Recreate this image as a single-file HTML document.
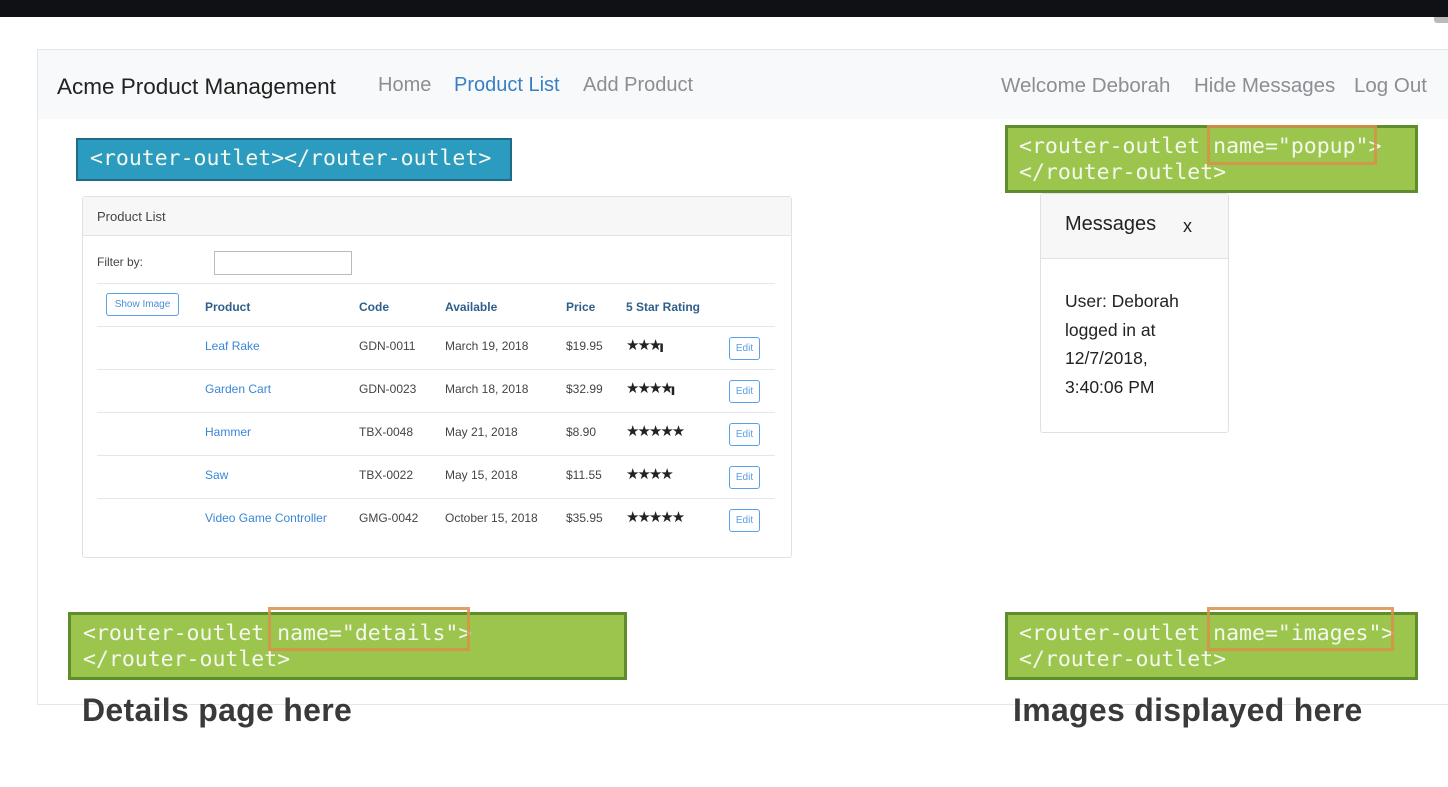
<!DOCTYPE html>
<html><head><meta charset="utf-8">
<style>
*{box-sizing:border-box;margin:0;padding:0}
body{width:1448px;height:787px;background:#fff;position:relative;overflow:hidden;font-family:"Liberation Sans",sans-serif}
.abs{position:absolute}
.mono{font-family:"DejaVu Sans Mono","Liberation Mono",monospace;font-size:21.5px;color:#f4f8ee;line-height:26px;white-space:pre}
.green{background:#9cc54d;border:3px solid #5f8d2c}
.hl{position:absolute;border:3px solid #d8904a;opacity:.85}
.nav{font-size:20px;color:#8a8f94}
.t{position:absolute;font-size:12px;color:#444}
.lnk{color:#3a86d6}
.th{position:absolute;font-size:12px;font-weight:bold;color:#2f5f8a}
.edit{position:absolute;left:729px;width:31px;height:23px;border:1px solid #5aa0e6;border-radius:3px;font-size:10px;color:#5aa0e6;text-align:center;line-height:21px}
.line{position:absolute;left:97px;width:678px;height:1px;background:#e3e6ea}
.st{position:absolute;left:626px;font-size:15px;color:#222;letter-spacing:-2px;line-height:14px}
</style></head><body>
<div class="abs" style="left:0;top:0;width:1448px;height:17px;background:#0f1115"></div>
<div class="abs" style="left:1434px;top:17px;width:14px;height:6px;background:#bbb;border-radius:0 0 0 3px"></div>
<div class="abs" style="left:37px;top:49px;width:1420px;height:656px;border:1px solid #e4e6e9;border-right:none"></div>
<div class="abs" style="left:38px;top:50px;width:1410px;height:69px;background:#f8f9fa"></div>
<div class="abs" style="left:57px;top:74px;font-size:22.5px;color:#222">Acme Product Management</div>
<div class="abs nav" style="left:378px;top:74px">Home</div>
<div class="abs nav" style="left:454px;top:74px;color:#3a7fc1">Product List</div>
<div class="abs nav" style="left:583px;top:74px">Add Product</div>
<div class="abs nav" style="left:1001px;top:74px;font-size:20.5px">Welcome Deborah</div>
<div class="abs nav" style="left:1194px;top:74px;font-size:20.5px">Hide Messages</div>
<div class="abs nav" style="left:1354px;top:74px;font-size:20.5px">Log Out</div>

<div class="abs mono" style="left:76px;top:138px;width:436px;height:43px;background:#2b9bbf;border:2px solid #1f6a85;padding:6px 0 0 12px">&lt;router-outlet&gt;&lt;/router-outlet&gt;</div>

<div class="abs" style="left:82px;top:196px;width:710px;height:362px;border:1px solid #dfe2e5;border-radius:3px"></div>
<div class="abs" style="left:83px;top:197px;width:708px;height:39px;background:#f7f7f7;border-bottom:1px solid #e1e3e6"></div>
<div class="t" style="left:97px;top:209px;font-size:13px">Product List</div>
<div class="t" style="left:97px;top:255px">Filter by:</div>
<div class="abs" style="left:214px;top:251px;width:138px;height:24px;border:1px solid #bbb"></div>
<div class="line" style="top:283px"></div>
<div class="abs" style="left:106px;top:293px;width:73px;height:23px;border:1px solid #5aa0e6;border-radius:3px;font-size:10px;color:#4a8fd6;text-align:center;line-height:21px">Show Image</div>
<div class="th" style="left:205px;top:300px">Product</div>
<div class="th" style="left:359px;top:300px">Code</div>
<div class="th" style="left:445px;top:300px">Available</div>
<div class="th" style="left:566px;top:300px">Price</div>
<div class="th" style="left:626px;top:300px">5 Star Rating</div>
<div class="line" style="top:326px"></div>
<div class="line" style="top:369px"></div>
<div class="line" style="top:412px"></div>
<div class="line" style="top:455px"></div>
<div class="line" style="top:498px"></div>

<div class="t lnk" style="left:205px;top:339px">Leaf Rake</div><div class="t" style="left:359px;top:339px">GDN-0011</div><div class="t" style="left:445px;top:339px">March 19, 2018</div><div class="t" style="left:566px;top:339px">$19.95</div><div class="st" style="top:339px">★★★<span style="font-size:7px">▌</span></div><div class="edit" style="top:337px">Edit</div>
<div class="t lnk" style="left:205px;top:382px">Garden Cart</div><div class="t" style="left:359px;top:382px">GDN-0023</div><div class="t" style="left:445px;top:382px">March 18, 2018</div><div class="t" style="left:566px;top:382px">$32.99</div><div class="st" style="top:382px">★★★★<span style="font-size:7px">▌</span></div><div class="edit" style="top:380px">Edit</div>
<div class="t lnk" style="left:205px;top:425px">Hammer</div><div class="t" style="left:359px;top:425px">TBX-0048</div><div class="t" style="left:445px;top:425px">May 21, 2018</div><div class="t" style="left:566px;top:425px">$8.90</div><div class="st" style="top:425px">★★★★★</div><div class="edit" style="top:423px">Edit</div>
<div class="t lnk" style="left:205px;top:468px">Saw</div><div class="t" style="left:359px;top:468px">TBX-0022</div><div class="t" style="left:445px;top:468px">May 15, 2018</div><div class="t" style="left:566px;top:468px">$11.55</div><div class="st" style="top:468px">★★★★</div><div class="edit" style="top:466px">Edit</div>
<div class="t lnk" style="left:205px;top:511px">Video Game Controller</div><div class="t" style="left:359px;top:511px">GMG-0042</div><div class="t" style="left:445px;top:511px">October 15, 2018</div><div class="t" style="left:566px;top:511px">$35.95</div><div class="st" style="top:511px">★★★★★</div><div class="edit" style="top:509px">Edit</div>

<div class="abs green mono" style="left:1005px;top:125px;width:413px;height:68px;padding:6px 0 0 11px">&lt;router-outlet name="popup"&gt;
&lt;/router-outlet&gt;</div>
<div class="hl" style="left:1207px;top:125px;width:170px;height:40px"></div>

<div class="abs" style="left:1040px;top:193px;width:189px;height:240px;border:1px solid #dfe2e5;border-radius:3px"></div>
<div class="abs" style="left:1041px;top:194px;width:187px;height:65px;background:#f7f7f7;border-bottom:1px solid #dfe2e5"></div>
<div class="abs" style="left:1065px;top:213px;font-size:20px;color:#222">Messages</div>
<div class="abs" style="left:1183px;top:216px;font-size:18px;color:#222">x</div>
<div class="abs" style="left:1065px;top:287px;font-size:17.5px;color:#222;line-height:28.5px">User: Deborah<br>logged in at<br>12/7/2018,<br>3:40:06 PM</div>

<div class="abs green mono" style="left:68px;top:612px;width:559px;height:68px;padding:6px 0 0 12px">&lt;router-outlet name="details"&gt;
&lt;/router-outlet&gt;</div>
<div class="hl" style="left:268px;top:607px;width:202px;height:44px"></div>
<div class="abs green mono" style="left:1005px;top:612px;width:413px;height:68px;padding:6px 0 0 11px">&lt;router-outlet name="images"&gt;
&lt;/router-outlet&gt;</div>
<div class="hl" style="left:1207px;top:607px;width:187px;height:44px"></div>

<div class="abs" style="left:82px;top:692px;font-size:32px;font-weight:bold;color:#3a3a3a;letter-spacing:0.3px">Details page here</div>
<div class="abs" style="left:1013px;top:692px;font-size:32px;font-weight:bold;color:#3a3a3a;letter-spacing:0.3px">Images displayed here</div>
</body></html>
